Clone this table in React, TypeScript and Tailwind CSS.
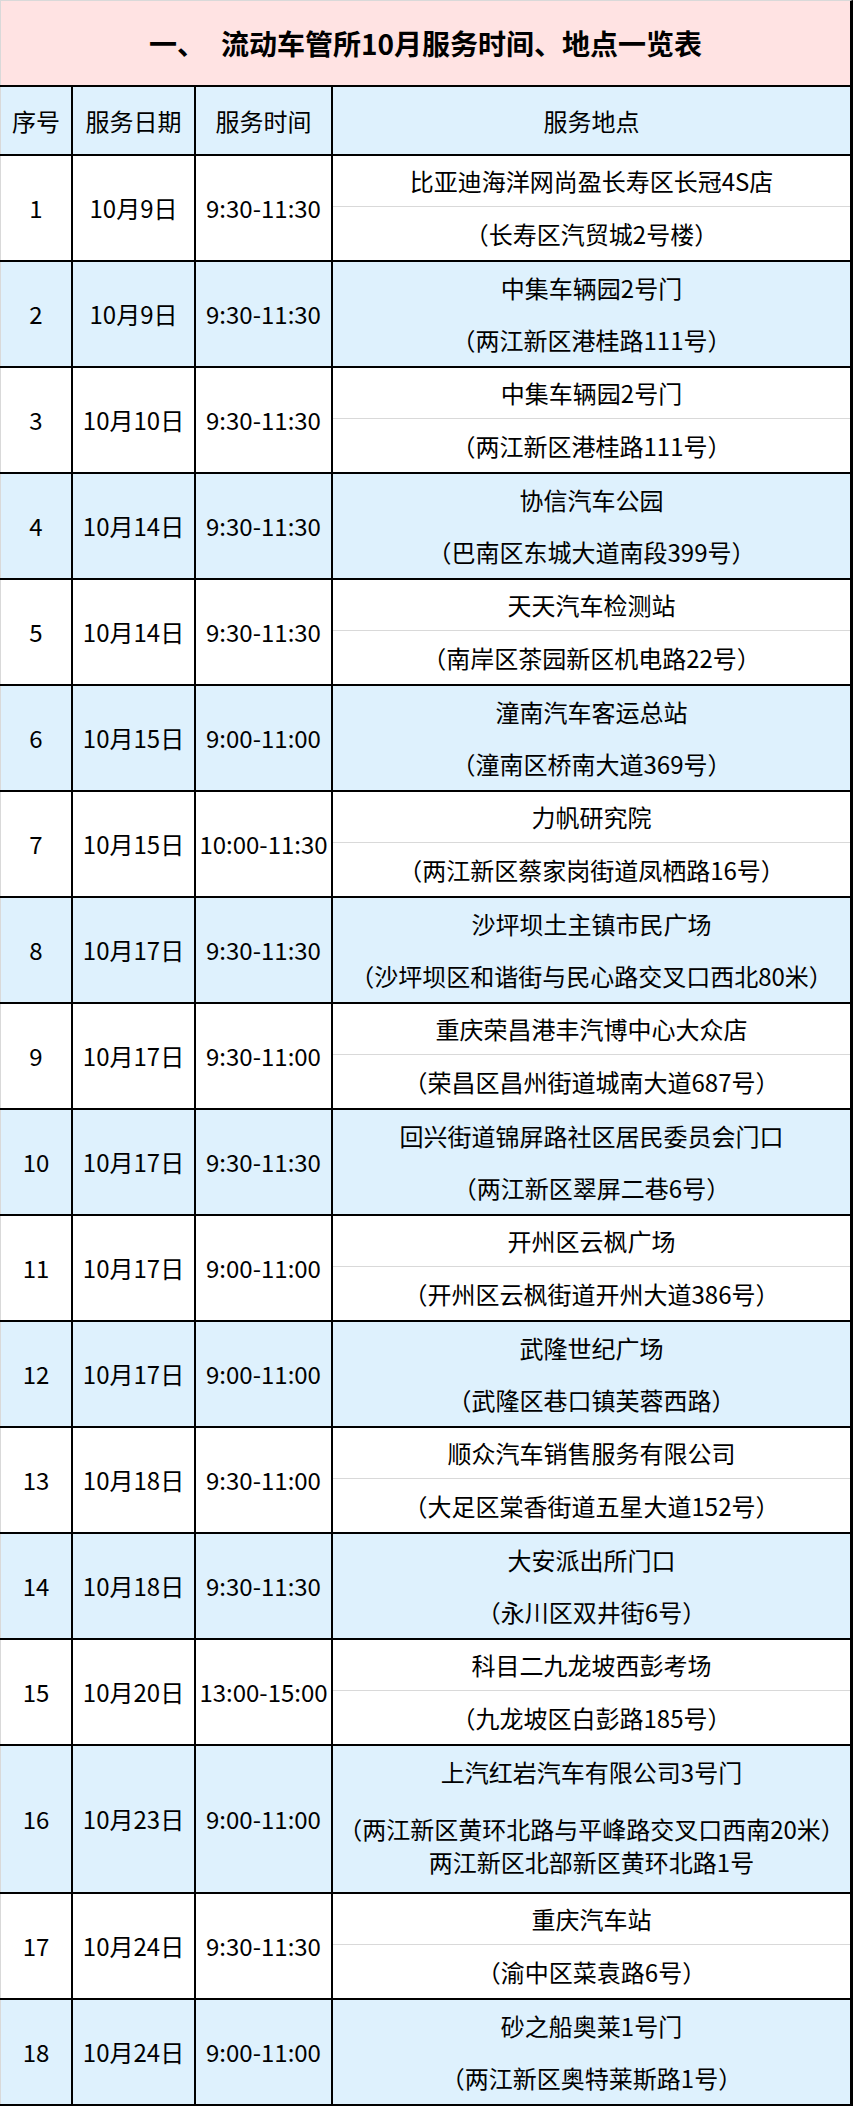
const rows: [string, string, string, string[]][] = [
  ["1", "10月9日", "9:30-11:30", ["比亚迪海洋网尚盈长寿区长冠4S店", "（长寿区汽贸城2号楼）"]],
  ["2", "10月9日", "9:30-11:30", ["中集车辆园2号门", "（两江新区港桂路111号）"]],
  ["3", "10月10日", "9:30-11:30", ["中集车辆园2号门", "（两江新区港桂路111号）"]],
  ["4", "10月14日", "9:30-11:30", ["协信汽车公园", "（巴南区东城大道南段399号）"]],
  ["5", "10月14日", "9:30-11:30", ["天天汽车检测站", "（南岸区茶园新区机电路22号）"]],
  ["6", "10月15日", "9:00-11:00", ["潼南汽车客运总站", "（潼南区桥南大道369号）"]],
  ["7", "10月15日", "10:00-11:30", ["力帆研究院", "（两江新区蔡家岗街道凤栖路16号）"]],
  ["8", "10月17日", "9:30-11:30", ["沙坪坝土主镇市民广场", "（沙坪坝区和谐街与民心路交叉口西北80米）"]],
  ["9", "10月17日", "9:30-11:00", ["重庆荣昌港丰汽博中心大众店", "（荣昌区昌州街道城南大道687号）"]],
  ["10", "10月17日", "9:30-11:30", ["回兴街道锦屏路社区居民委员会门口", "（两江新区翠屏二巷6号）"]],
  ["11", "10月17日", "9:00-11:00", ["开州区云枫广场", "（开州区云枫街道开州大道386号）"]],
  ["12", "10月17日", "9:00-11:00", ["武隆世纪广场", "（武隆区巷口镇芙蓉西路）"]],
  ["13", "10月18日", "9:30-11:00", ["顺众汽车销售服务有限公司", "（大足区棠香街道五星大道152号）"]],
  ["14", "10月18日", "9:30-11:30", ["大安派出所门口", "（永川区双井街6号）"]],
  ["15", "10月20日", "13:00-15:00", ["科目二九龙坡西彭考场", "（九龙坡区白彭路185号）"]],
  ["16", "10月23日", "9:00-11:00", ["上汽红岩汽车有限公司3号门", "（两江新区黄环北路与平峰路交叉口西南20米）", "两江新区北部新区黄环北路1号"]],
  ["17", "10月24日", "9:30-11:30", ["重庆汽车站", "（渝中区菜袁路6号）"]],
  ["18", "10月24日", "9:00-11:00", ["砂之船奥莱1号门", "（两江新区奥特莱斯路1号）"]],
];

function Row({ no, date, time, place }: { no: string; date: string; time: string; place: string[] }) {
  const blue = Number(no) % 2 === 0;
  const tall = place.length > 2;
  return (
    <div
      className={`grid grid-cols-[73px_123px_137px_1fr] border-b-2 border-black ${
        blue ? "bg-[#def1fd]" : "bg-white"
      } ${tall ? "h-[148px]" : "h-[106px]"}`}
    >
      <div className="flex items-center justify-center border-l border-l-[#d9d9d9] border-r-2 border-r-black">{no}</div>
      <div className="flex items-center justify-center border-r-2 border-black">{date}</div>
      <div className="flex items-center justify-center border-r-2 border-black">{time}</div>
      <div className="flex flex-col border-r-[3px] border-black">
        <div className={`flex h-[51px] items-center justify-center whitespace-nowrap ${blue ? "" : "border-b border-[#d9d9d9]"}`}>
          {place[0]}
        </div>
        <div className="flex flex-1 flex-col items-center justify-center whitespace-nowrap leading-[33px]">
          {place.slice(1).map((p) => (
            <div key={p}>{p}</div>
          ))}
        </div>
      </div>
    </div>
  );
}

export default function App() {
  return (
    <div className="w-[853px] bg-white text-[24px] leading-none text-black font-['Noto_Sans_CJK_SC','Noto_Sans',sans-serif]">
      <div className="flex h-[85px] items-center justify-center border-t border-l border-[#d9d9d9] border-r-[3px] border-r-black bg-[#ffe3e3] text-[28px] font-bold">
        <span>一、</span>
        <span className="ml-4">流动车管所10月服务时间、地点一览表</span>
      </div>
      <div className="grid h-[71px] grid-cols-[73px_123px_137px_1fr] border-y-2 border-black bg-[#def1fd]">
        <div className="flex items-center justify-center border-l border-l-[#d9d9d9] border-r-2 border-r-black">序号</div>
        <div className="flex items-center justify-center border-r-2 border-black">服务日期</div>
        <div className="flex items-center justify-center border-r-2 border-black">服务时间</div>
        <div className="flex items-center justify-center border-r-[3px] border-black">服务地点</div>
      </div>
      {rows.map(([no, date, time, place]) => (
        <Row key={no} no={no} date={date} time={time} place={place} />
      ))}
    </div>
  );
}
